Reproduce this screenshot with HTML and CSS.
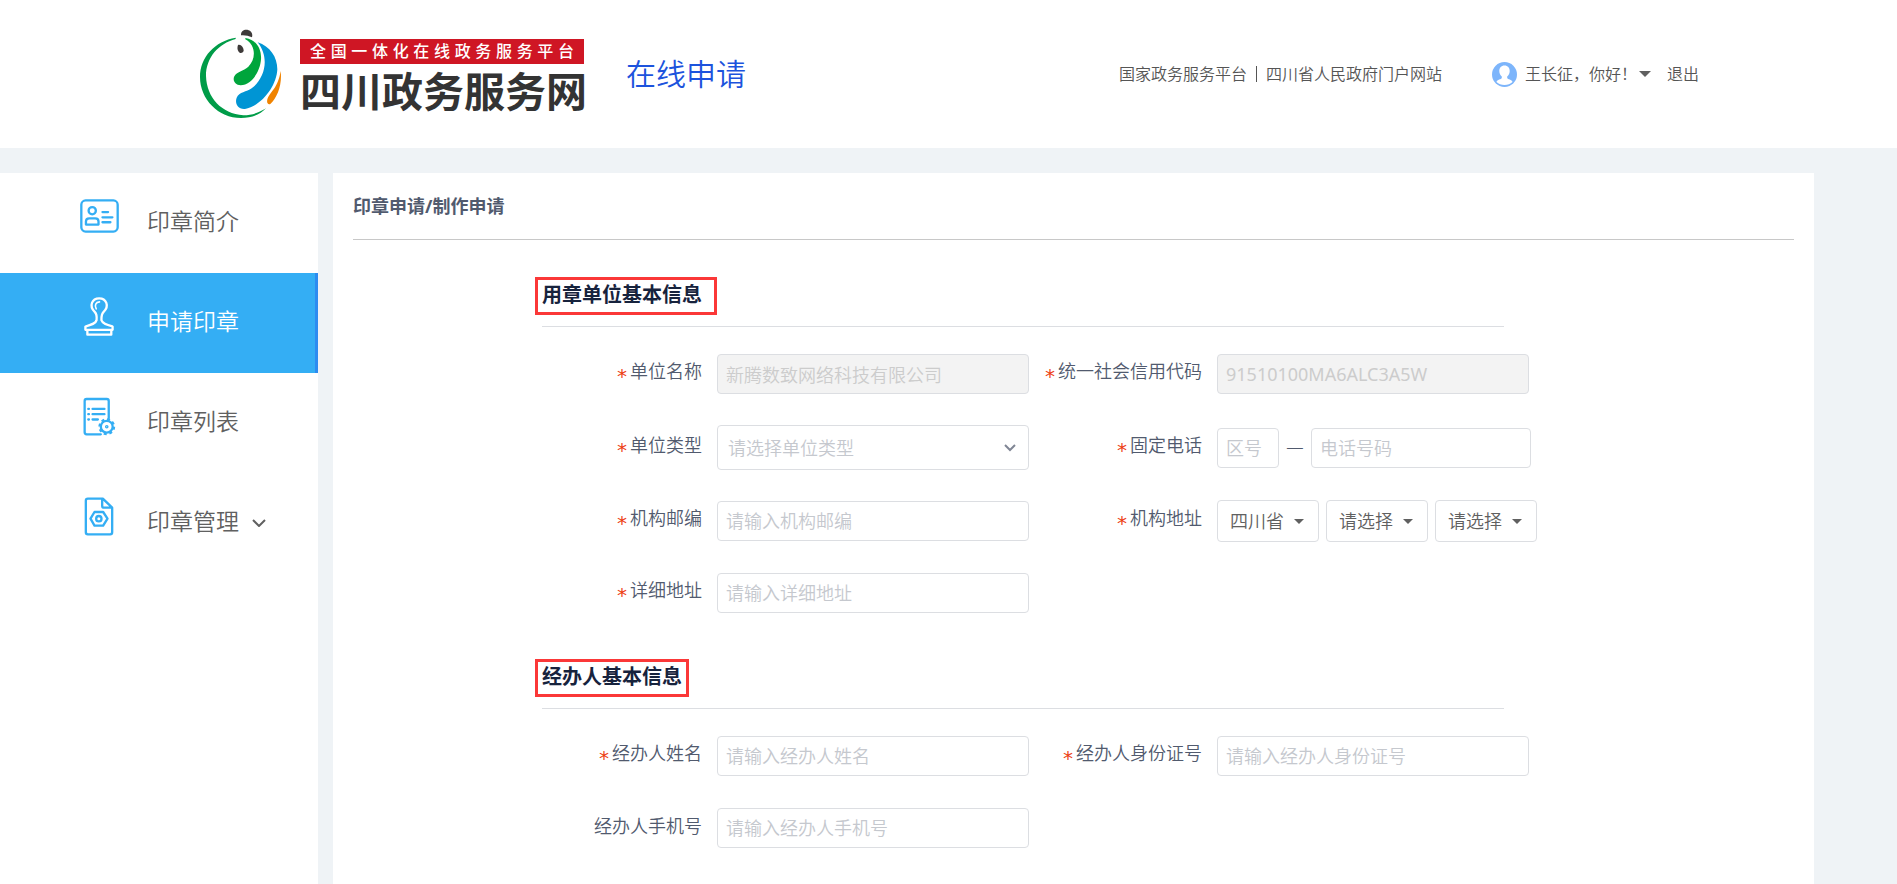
FILE: index.html
```html
<!DOCTYPE html>
<html lang="zh-CN">
<head>
<meta charset="utf-8">
<title>四川政务服务网 - 在线申请</title>
<link rel="stylesheet" href="styles.css">
</head>
<body>
<header class="header">
  <div class="brand">
    <svg class="brand-mark" viewBox="30 24 246 270" aria-hidden="true">
      <path fill="#009c48" d="M137 50C75 60 30 108 30 168C30 235 85 291 153 291C185 291 212 280 228 262C205 276 185 283 160 283C95 278 50 230 48 165C48 110 85 68 137 54Z"/>
      <path fill="#00a53c" d="M166 51C200 56 215 85 213 115C211 150 185 193 152 193C135 192 127 178 133 166C140 152 160 150 175 137C197 116 200 74 166 55Z"/>
      <path fill="#0095d4" d="M203 64C240 76 262 108 262 145C260 195 215 255 165 264C142 266 134 245 140 230C147 213 170 213 185 202C225 172 240 110 203 64Z"/>
      <path fill="#f08300" d="M272 150C277 190 262 230 241 249C232 252 229 243 233 232C243 210 264 200 272 150Z"/>
      <path fill="#3e3a39" d="M153 43C152 25 172 22 183 32C188 38 187 45 186 49C175 44 165 42 153 43Z"/>
      <path fill="#3e3a39" d="M144 72C152 68 162 80 161 90C158 97 150 98 146 92C141 85 142 78 144 72Z"/>
    </svg>
    <div class="brand-text">
      <p class="brand-banner">全国一体化在线政务服务平台</p>
      <p class="brand-name">四川政务服务网</p>
    </div>
    <h1 class="site-title">在线申请</h1>
  </div>
  <nav class="top-nav">
    <div class="portal-links">
      <a href="#">国家政务服务平台</a>
      <span class="divider"></span>
      <a href="#">四川省人民政府门户网站</a>
    </div>
    <button class="user" type="button">
      <svg class="avatar" viewBox="0 0 25 25" aria-hidden="true">
        <circle cx="12.5" cy="12.5" r="12.5" fill="#7db5fb"/>
        <path fill="#fff" d="M12.5 3.5c3.3 0 5.2 2.4 5.2 5.6 0 2.300-1.100 4.400-2.500 5.500v1.500c.6 1.600 4.600 1.300 5.300 3.800-2 2-4.800 3-8 3s-6-1-8-3c.7-2.500 4.700-2.200 5.300-3.800v-1.500c-1.400-1.100-2.500-3.200-2.500-5.500 0-3.200 1.900-5.600 5.200-5.600z"/>
      </svg>
      <span>王长征，你好！</span>
      <span class="caret"></span>
    </button>
    <a class="logout" href="#">退出</a>
  </nav>
</header>

<div class="layout">
  <nav class="sidebar">
    <a class="menu-item" href="#">
      <span class="menu-icon">
        <svg width="39" height="34" viewBox="237 176 118 102" class="line-icon" aria-hidden="true">
          <rect x="241" y="180" width="110" height="94" rx="13"/>
          <circle cx="274" cy="211" r="11"/>
          <path d="M255 253v-9q0-10 10-10h18q10 0 10 10v9zM305 215h17M305 231h30M305 246h24"/>
        </svg>
      </span>
      <span class="menu-label">印章简介</span>
    </a>
    <a class="menu-item active" href="#">
      <span class="menu-icon">
        <svg width="30" height="39" viewBox="250 467 91 119" class="line-icon" aria-hidden="true">
          <path d="M283 513C263 494 275 471 296 471C317 471 329 494 309 513C302 520 303 530 303 538C306 548 320 552 337 557V567H254V557C271 552 286 548 288 538C289 528 290 520 283 513Z"/>
          <path d="M260 570v12h73v-12"/>
          <path stroke-width="5" d="M287 503C281 492 286 483 297 482"/>
        </svg>
      </span>
      <span class="menu-label">申请印章</span>
    </a>
    <a class="menu-item" href="#">
      <span class="menu-icon">
        <svg width="33" height="39" viewBox="246 79 100 116" class="line-icon" aria-hidden="true">
          <path d="M324 142V90q0-6-6-6H257q-6 0-6 6v95q0 6 6 6h43"/>
          <path d="M275 114h36M275 130h36M275 146h16M262 114h2M262 130h2M262 146h2"/>
          <circle cx="318" cy="168" r="18"/>
          <circle cx="318" cy="168" r="22" stroke-linecap="butt" stroke-dasharray="9 8.280"/>
          <circle cx="318" cy="168" r="2"/>
        </svg>
      </span>
      <span class="menu-label">印章列表</span>
    </a>
    <a class="menu-item" href="#">
      <span class="menu-icon">
        <svg width="30" height="39" viewBox="255 379 89 117" class="line-icon" aria-hidden="true">
          <path d="M311 384H266q-6 0-6 6v95q0 6 6 6h67q6 0 6-6V411zM309 384v21q0 6 6 6h24"/>
          <path d="M286 424h26l13 20-13 21h-26l-12-21z"/>
          <circle cx="299" cy="444" r="8"/>
        </svg>
      </span>
      <span class="menu-label">印章管理</span>
      <svg class="menu-chevron" width="14" height="8" viewBox="0 0 14 8" aria-hidden="true"><path d="M1 1l6 6 6-6"/></svg>
    </a>
  </nav>

  <main class="panel">
    <h2 class="breadcrumb">印章申请/制作申请</h2>
    <form class="form">
      <section class="section">
        <div class="section-head"><h3 class="section-title wide">用章单位基本信息</h3></div>
        <div class="fields">
          <div class="field">
            <label class="required" for="unit-name">单位名称</label>
            <div class="control"><input id="unit-name" type="text" value="新腾数致网络科技有限公司" disabled></div>
          </div>
          <div class="field">
            <label class="required" for="credit-code">统一社会信用代码</label>
            <div class="control"><input id="credit-code" class="code" type="text" value="91510100MA6ALC3A5W" disabled></div>
          </div>
          <div class="field">
            <label class="required" for="unit-type">单位类型</label>
            <div class="control">
              <div class="picker large">
                <select id="unit-type"><option>请选择单位类型</option></select>
                <svg class="picker-chevron" width="12" height="8" viewBox="0 0 12 8" aria-hidden="true"><path d="M1 1l5 5 5-5"/></svg>
              </div>
            </div>
          </div>
          <div class="field">
            <label class="required" for="area-code">固定电话</label>
            <div class="control phone">
              <input id="area-code" class="area-code" type="text" placeholder="区号">
              <span class="dash">—</span>
              <input type="text" placeholder="电话号码" aria-label="电话号码">
            </div>
          </div>
          <div class="field">
            <label class="required" for="postcode">机构邮编</label>
            <div class="control"><input id="postcode" type="text" placeholder="请输入机构邮编"></div>
          </div>
          <div class="field">
            <label class="required" for="province">机构地址</label>
            <div class="control region">
              <div class="picker"><select id="province"><option>四川省</option></select><span class="caret"></span></div>
              <div class="picker"><select aria-label="市"><option>请选择</option></select><span class="caret"></span></div>
              <div class="picker"><select aria-label="区县"><option>请选择</option></select><span class="caret"></span></div>
            </div>
          </div>
          <div class="field">
            <label class="required" for="address">详细地址</label>
            <div class="control"><input id="address" type="text" placeholder="请输入详细地址"></div>
          </div>
        </div>
      </section>

      <section class="section">
        <div class="section-head"><h3 class="section-title">经办人基本信息</h3></div>
        <div class="fields">
          <div class="field">
            <label class="required" for="agent-name">经办人姓名</label>
            <div class="control"><input id="agent-name" type="text" placeholder="请输入经办人姓名"></div>
          </div>
          <div class="field">
            <label class="required" for="agent-id">经办人身份证号</label>
            <div class="control"><input id="agent-id" type="text" placeholder="请输入经办人身份证号"></div>
          </div>
          <div class="field">
            <label for="agent-phone">经办人手机号</label>
            <div class="control"><input id="agent-phone" type="text" placeholder="请输入经办人手机号"></div>
          </div>
        </div>
      </section>
    </form>
  </main>
</div>
</body>
</html>
```
FILE: styles.css
```css
* {
  box-sizing: border-box;
}

body {
  display: flex;
  flex-direction: column;
  min-height: 100vh;
  margin: 0;
  background: #eff3f6;
  color: #515a6e;
  font-family: "Noto Sans", "Noto Sans CJK SC", sans-serif;
  font-size: 18px;
  font-weight: 350;
}

h1, h2, h3, p {
  margin: 0;
}

a {
  color: inherit;
  text-decoration: none;
}

button, input, select {
  margin: 0;
  font: inherit;
}

.caret {
  border: 5px solid transparent;
  border-top-color: #606060;
  border-bottom: 0;
}

/* Header */

.header {
  display: flex;
  align-items: center;
  justify-content: space-between;
  height: 148px;
  padding: 0 198px 0 200px;
  background: #fff;
}

.brand {
  display: flex;
  align-items: center;
}

.brand-mark {
  width: 82px;
  height: 90px;
  margin-right: 18px;
}

.brand-text {
  width: 284px;
  padding-top: 8px;
}

.brand-banner {
  padding: 0 10px;
  background: #cf1624;
  color: #fff;
  font-size: 16px;
  font-weight: 500;
  line-height: 25px;
  text-align: justify;
  text-align-last: justify;
}

.brand-name {
  color: #333;
  font-size: 41px;
  font-weight: 700;
  line-height: 54px;
  white-space: nowrap;
}

.site-title {
  margin-left: 42px;
  color: #1c53dd;
  font-size: 30px;
  font-weight: 350;
  line-height: 40px;
}

.top-nav {
  display: flex;
  align-items: center;
  color: #555;
  font-size: 16px;
  line-height: 24px;
}

.portal-links {
  display: flex;
  align-items: center;
  gap: 9px;
}

.divider {
  width: 1px;
  height: 16px;
  background: #555;
}

.user {
  display: flex;
  align-items: center;
  margin: 0 16px 0 50px;
  padding: 0;
  border: 0;
  background: none;
  color: inherit;
  cursor: pointer;
}

.user .caret {
  margin-left: 2px;
  border-width: 6px 6px 0;
}

.avatar {
  width: 25px;
  height: 25px;
  margin-right: 8px;
}

/* Layout */

.layout {
  display: flex;
  flex: 1;
  gap: 15px;
  padding: 25px 83px 0 0;
}

.sidebar {
  flex: none;
  width: 318px;
  background: #fff;
}

.menu-item {
  display: flex;
  align-items: center;
  height: 100px;
  padding-left: 79px;
  color: #606060;
  font-size: 23px;
}

.menu-item.active {
  border-right: 3px solid #2d8cf0;
  background: #34aef4;
  color: #fff;
}

.menu-icon {
  display: flex;
  justify-content: center;
  width: 40px;
  margin: 0 28px 14px 0;
}

.menu-label {
  padding-bottom: 6px;
}

.line-icon {
  fill: none;
  stroke: #34aef4;
  stroke-width: 7;
  stroke-linecap: round;
  stroke-linejoin: round;
}

.active .line-icon {
  stroke: #fff;
}

.menu-chevron {
  margin-left: 13px;
  fill: none;
  stroke: #606060;
  stroke-width: 2;
}

.panel {
  flex: 1;
  min-width: 0;
  padding: 0 20px 35px;
  background: #fff;
}

.breadcrumb {
  border-bottom: 1px solid #c8c8c8;
  font-size: 18px;
  font-weight: 700;
  line-height: 66px;
}

/* Form */

.form {
  display: flex;
  flex-direction: column;
  gap: 45px;
  max-width: 1184px;
  padding: 37px 0 0 176px;
}

.section-head {
  margin: 0 33px 26px 13px;
  padding-bottom: 11px;
  border-bottom: 1px solid #dcdee2;
}

.section-title {
  width: fit-content;
  margin-left: -7px;
  padding: 0 4px 2px;
  border: 3px solid #fb3838;
  color: #17233d;
  font-size: 20px;
  font-weight: 700;
  line-height: 30px;
}

.section-title.wide {
  padding-right: 12px;
}

.fields {
  display: grid;
  grid-template-columns: 500fr 508fr;
  row-gap: 30px;
}

.field {
  display: flex;
  align-items: center;
  gap: 15px;
  min-height: 42px;
}

.field label {
  flex: none;
  width: 173px;
  padding-bottom: 4px;
  line-height: 26px;
  text-align: right;
}

.required::before {
  content: "*";
  margin-right: 2px;
  color: #ed4014;
  font-family: "DejaVu Sans Mono", monospace;
  font-size: 20px;
  line-height: 1;
  vertical-align: -5px;
}

.control {
  flex: 1;
  min-width: 0;
  max-width: 312px;
}

.control input {
  display: block;
  width: 100%;
  height: 40px;
  padding: 0 8px;
  border: 1px solid #dcdee2;
  border-radius: 4px;
  background: #fff;
  color: #515a6e;
}

.control input::placeholder {
  color: #c5c8ce;
}

.control input:disabled {
  background: #f3f3f3;
  color: #ccc;
}

.control .code {
  font-weight: 400;
}

.control.phone {
  display: flex;
  align-items: center;
  max-width: 314px;
}

.phone .area-code {
  flex: none;
  width: 62px;
}

.phone .dash {
  flex: none;
  width: 32px;
  padding-bottom: 4px;
  font-family: "Noto Sans CJK SC", sans-serif;
  font-size: 20px;
  line-height: 26px;
  text-align: center;
}

.control.region {
  display: flex;
  gap: 7px;
  max-width: 320px;
}

.picker {
  display: grid;
  flex: 1;
  align-items: center;
}

.picker > * {
  grid-area: 1 / 1;
}

.picker select {
  width: 100%;
  height: 42px;
  padding: 0 12px;
  border: 1px solid #dcdee2;
  border-radius: 4px;
  background: #fff;
  color: #606060;
  appearance: none;
}

.picker .caret {
  justify-self: end;
  margin-right: 15px;
  pointer-events: none;
}

.picker.large select {
  height: 45px;
  padding: 0 10px;
  color: #c5c8ce;
}

.picker-chevron {
  justify-self: end;
  margin-right: 13px;
  fill: none;
  stroke: #808695;
  stroke-width: 2;
  pointer-events: none;
}
```
